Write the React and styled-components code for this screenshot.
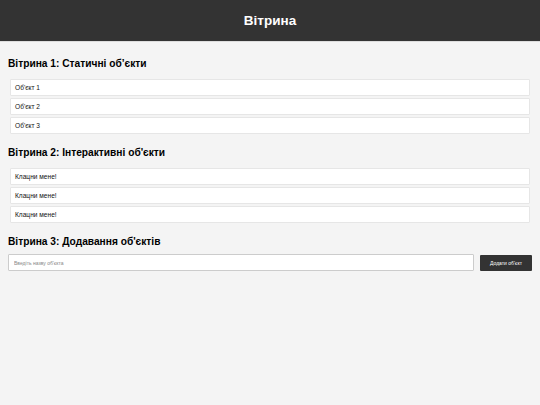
import React from "react";
import styled, { createGlobalStyle } from "styled-components";

const GlobalStyle = createGlobalStyle`
  html, body {
    margin: 0;
    padding: 0;
    background: #f4f4f4;
    font-family: "Liberation Sans", Arial, sans-serif;
  }
`;

const Header = styled.header`
  height: 41px;
  background: #333;
  border-bottom: 1px solid #ddd;
  display: flex;
  align-items: center;
  justify-content: center;
`;

const Title = styled.h1`
  margin: 0;
  color: #fff;
  font-size: 13.5px;
  font-weight: bold;
`;

const Main = styled.main`
  padding: 6px 8px 20px;
`;

const Section = styled.section`
  margin-top: 9px;
`;

const SectionTitle = styled.h2`
  margin: 0 0 5px;
  font-size: 10.2px;
  font-weight: bold;
  color: #000;
  line-height: 14px;
`;

const List = styled.div`
  display: flex;
  flex-direction: column;
  gap: 2px;
  padding: 3px 2px 0;
  margin-bottom: 12px;
`;

const Item = styled.div`
  height: 17px;
  box-sizing: border-box;
  background: #fff;
  border: 1px solid #e6e6e6;
  border-radius: 1px;
  padding: 0 4px;
  display: flex;
  align-items: center;
  font-size: 6.6px;
  color: #111;
  cursor: ${(p) => (p.$clickable ? "pointer" : "default")};
`;

const Form = styled.div`
  display: flex;
  gap: 6px;
  align-items: stretch;
`;

const Input = styled.input`
  flex: 1;
  height: 17px;
  box-sizing: border-box;
  border: 1px solid #ccc;
  border-radius: 1px;
  padding: 0 5px;
  font-size: 5px;
  font-family: inherit;
  background: #fff;
  outline: none;
  &::placeholder {
    color: #888;
  }
`;

const Button = styled.button`
  width: 52px;
  height: 16px;
  margin-top: 1px;
  border: none;
  border-radius: 1px;
  background: #333;
  color: #fff;
  font-size: 5px;
  font-family: inherit;
  padding: 0;
  cursor: pointer;
`;

export default function App() {
  const statics = ["Об'єкт 1", "Об'єкт 2", "Об'єкт 3"];
  return (
    <>
      <GlobalStyle />
      <Header>
        <Title>Вітрина</Title>
      </Header>
      <Main>
        <Section>
          <SectionTitle>Вітрина 1: Статичні об’єкти</SectionTitle>
          <List>
            {statics.map((s) => (
              <Item key={s}>{s}</Item>
            ))}
          </List>
        </Section>
        <Section>
          <SectionTitle>Вітрина 2: Інтерактивні об'єкти</SectionTitle>
          <List>
            {[1, 2, 3].map((n) => (
              <Item key={n} $clickable>
                Клацни мене!
              </Item>
            ))}
          </List>
        </Section>
        <Section>
          <SectionTitle>Вітрина 3: Додавання об'єктів</SectionTitle>
          <Form>
            <Input placeholder="Введіть назву об'єкта" />
            <Button>Додати об'єкт</Button>
          </Form>
        </Section>
      </Main>
    </>
  );
}
